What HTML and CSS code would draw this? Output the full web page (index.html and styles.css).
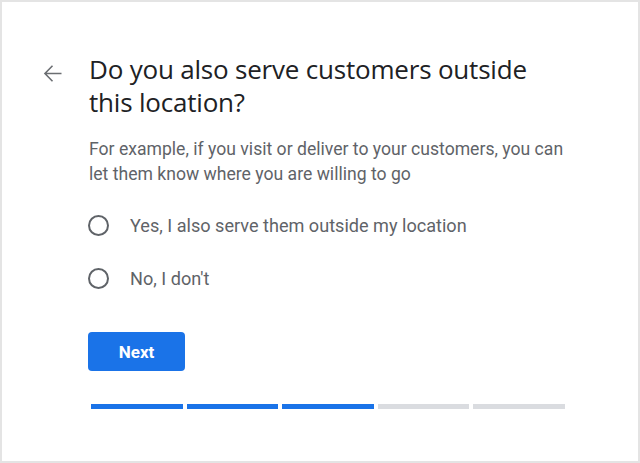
FILE: index.html
```html
<!DOCTYPE html>
<html>
<head>
<meta charset="utf-8">
<link rel="stylesheet" href="styles.css">
</head>
<body>
<div class="frame">
  <div class="row">
    <div class="back">
      <svg width="27" height="27" viewBox="0 0 24 24"><path d="M20 11.25H6.9l5.6-5.6-1-1L4.3 12l7.2 7.35 1-1-5.6-5.6H20z" fill="#6b6e72"/></svg>
    </div>
    <div class="content">
      <h1 class="title">Do you also serve customers outside this location?</h1>
      <p class="desc">For example, if you visit or deliver to your customers, you can let them know where you are willing to go</p>
      <div class="options">
        <label class="option"><span class="radio"></span><span class="label">Yes, I also serve them outside my location</span></label>
        <label class="option"><span class="radio"></span><span class="label">No, I don't</span></label>
      </div>
      <button class="next">Next</button>
      <div class="progress">
        <span class="seg on"></span>
        <span class="seg on"></span>
        <span class="seg on"></span>
        <span class="seg"></span>
        <span class="seg"></span>
      </div>
    </div>
  </div>
</div>
</body>
</html>
```

FILE: styles.css
```css
html, body {
  margin: 0;
  padding: 0;
  background: #ffffff;
}
.frame {
  width: 640px;
  height: 463px;
  box-sizing: border-box;
  border: 2px solid #e4e4e4;
  font-family: Roboto, "Liberation Sans", sans-serif;
}
.row {
  display: flex;
  padding-top: 51px;
  padding-left: 37px;
}
.back {
  width: 50px;
  padding-top: 7px;
}
.back svg {
  display: block;
}
.content {
  width: 480px;
}
.title {
  margin: 0;
  font-family: "Open Sans", Roboto, sans-serif;
  font-weight: 400;
  font-size: 26px;
  line-height: 33px;
  color: #202124;
  letter-spacing: -0.2px;
}
.desc {
  margin: 18px 0 0;
  font-size: 17.6px;
  line-height: 25px;
  color: #5f6368;
}
.options {
  margin-top: 12px;
  display: flex;
  flex-direction: column;
}
.option {
  display: flex;
  align-items: center;
  height: 53px;
}
.radio {
  width: 21px;
  height: 21px;
  box-sizing: border-box;
  border: 2px solid #5f6368;
  border-radius: 50%;
  margin-left: -1px;
  margin-right: 21px;
  flex: none;
}
.label {
  font-size: 18.1px;
  color: #5f6368;
}
.next {
  display: block;
  margin-top: 27px;
  margin-left: -1px;
  width: 97px;
  height: 39px;
  border: none;
  border-radius: 4px;
  background: #1a73e8;
  color: #ffffff;
  font-family: Roboto, sans-serif;
  font-weight: 700;
  font-size: 17px;
}
.progress {
  display: flex;
  gap: 4px;
  margin-top: 33px;
  margin-left: 2px;
}
.seg {
  width: 91.5px;
  height: 5px;
  background: #dadce0;
}
.seg.on {
  background: #1a73e8;
}
```
